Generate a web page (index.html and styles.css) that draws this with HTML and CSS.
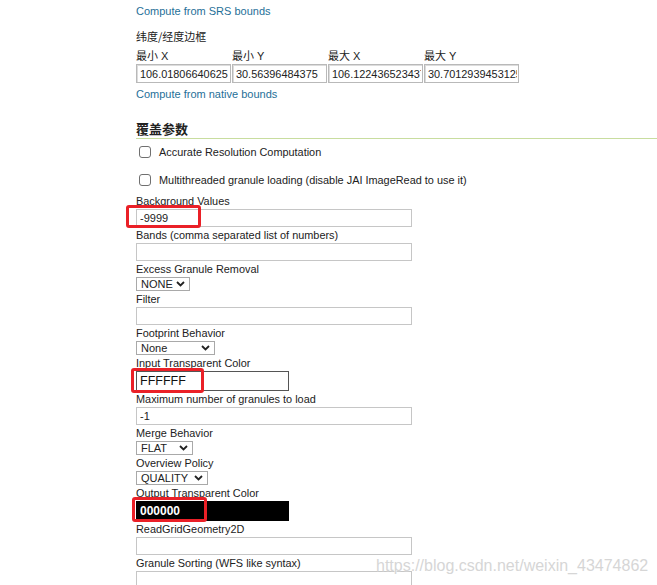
FILE: index.html
```html
<!DOCTYPE html>
<html lang="zh">
<head>
<meta charset="utf-8">
<title>覆盖参数</title>
<link rel="stylesheet" href="styles.css">
</head>
<body>
<div class="page">
  <a class="link first">Compute from SRS bounds</a>
  <div class="cjk-title">纬度/经度边框</div>
  <div class="bbox">
    <div class="bcol"><span class="blabel">最小 X</span><input class="binput" value="106.01806640625"></div>
    <div class="bcol"><span class="blabel">最小 Y</span><input class="binput" value="30.56396484375"></div>
    <div class="bcol"><span class="blabel">最大 X</span><input class="binput" value="106.122436523437"></div>
    <div class="bcol"><span class="blabel">最大 Y</span><input class="binput" value="30.7012939453125"></div>
  </div>
  <a class="link second">Compute from native bounds</a>

  <h3 class="section">覆盖参数</h3>

  <div class="check first-check"><span class="box"></span><span>Accurate Resolution Computation</span></div>
  <div class="check second-check"><span class="box"></span><span>Multithreaded granule loading (disable JAI ImageRead to use it)</span></div>

  <div class="fields">
    <div class="label">Background Values</div>
    <input class="text" value="-9999">
    <div class="label">Bands (comma separated list of numbers)</div>
    <input class="text" value="">
    <div class="label">Excess Granule Removal</div>
    <div class="select w-none-up"><span>NONE</span><svg width="9" height="6" viewBox="0 0 9 6"><path d="M1 1 L4.5 4.5 L8 1" fill="none" stroke="#222" stroke-width="1.8"/></svg></div>
    <div class="label">Filter</div>
    <input class="text" value="">
    <div class="label">Footprint Behavior</div>
    <div class="select w-none"><span>None</span><svg width="9" height="6" viewBox="0 0 9 6"><path d="M1 1 L4.5 4.5 L8 1" fill="none" stroke="#222" stroke-width="1.8"/></svg></div>
    <div class="label">Input Transparent Color</div>
    <input class="color light" value="FFFFFF">
    <div class="label">Maximum number of granules to load</div>
    <input class="text" value="-1">
    <div class="label">Merge Behavior</div>
    <div class="select w-flat"><span>FLAT</span><svg width="9" height="6" viewBox="0 0 9 6"><path d="M1 1 L4.5 4.5 L8 1" fill="none" stroke="#222" stroke-width="1.8"/></svg></div>
    <div class="label">Overview Policy</div>
    <div class="select w-quality"><span>QUALITY</span><svg width="9" height="6" viewBox="0 0 9 6"><path d="M1 1 L4.5 4.5 L8 1" fill="none" stroke="#222" stroke-width="1.8"/></svg></div>
    <div class="label">Output Transparent Color</div>
    <input class="color dark" value="000000">
    <div class="label">ReadGridGeometry2D</div>
    <input class="text" value="">
    <div class="label">Granule Sorting (WFS like syntax)</div>
    <input class="text" value="">
  </div>
</div>

<div class="mark mark1"></div>
<div class="mark mark2"></div>
<div class="mark mark3"></div>
<div class="watermark">https://blog.csdn.net/weixin_43474862</div>
</body>
</html>
```
FILE: styles.css
```css
html, body {
  margin: 0;
  padding: 0;
  background: #ffffff;
}
body {
  width: 657px;
  height: 585px;
  overflow: hidden;
  position: relative;
  font-family: "Liberation Sans", Arial, "Noto Sans CJK SC", sans-serif;
  font-size: 10.9px;
  color: #222222;
}
.page {
  padding: 3px 0 0 136px;
  display: flex;
  flex-direction: column;
  align-items: flex-start;
}
.link {
  color: #1f6f98;
  line-height: 16px;
  font-size: 11px;
  display: block;
}
.cjk-title {
  margin-top: 9px;
  line-height: 16px;
  font-family: "Noto Sans CJK SC", sans-serif;
  font-size: 11px;
}
.bbox {
  display: grid;
  grid-template-columns: repeat(4, 96px);
  margin-top: 5px;
}
.bcol {
  display: flex;
  flex-direction: column;
}
.blabel {
  line-height: 15px;
  font-family: "Liberation Sans", "Noto Sans CJK SC", sans-serif;
  font-size: 11px;
}
.binput {
  box-sizing: border-box;
  width: 95px;
  height: 19px;
  margin: 0;
  border: 1px solid #b9b9b9;
  box-shadow: inset 1px 1px 0 #dcdcdc;
  padding: 0 1px 0 3px;
  font-family: "Liberation Sans", Arial, sans-serif;
  font-size: 10.9px;
  color: #222;
  background: #fff;
}
.link.second {
  margin-top: 3px;
}
.section {
  align-self: stretch;
  margin: 19px 0 0 0;
  font-family: "Noto Sans CJK SC", sans-serif;
  font-weight: bold;
  font-size: 13px;
  line-height: 16px;
  padding-bottom: 1px;
  border-bottom: 1px solid #c8dd9f;
  color: #222;
}
.check {
  display: flex;
  align-items: center;
  gap: 8px;
  line-height: 16px;
}
.first-check { margin-top: 5px; }
.second-check { margin-top: 12px; }
.box {
  box-sizing: border-box;
  width: 12px;
  height: 12px;
  margin-left: 3px;
  border: 1px solid #707070;
  border-radius: 3px;
  background: #fff;
}
.fields {
  display: flex;
  flex-direction: column;
  align-items: flex-start;
  margin-top: 5px;
}
.label {
  line-height: 16px;
}
.text {
  box-sizing: border-box;
  width: 276px;
  height: 18px;
  margin: 0;
  border: 1px solid #c6c6c6;
  padding: 0 3px;
  font-family: "Liberation Sans", Arial, sans-serif;
  font-size: 11px;
  color: #222;
  background: #fff;
}
.select {
  box-sizing: border-box;
  height: 14px;
  border: 1px solid #a9a9a9;
  display: flex;
  align-items: center;
  justify-content: space-between;
  padding: 0 4px 0 4px;
  font-size: 11px;
  line-height: 12px;
  background: #fff;
}
.w-none-up { width: 54px; }
.w-none { width: 79px; }
.w-flat { width: 57px; }
.w-quality { width: 72px; }
.color {
  box-sizing: border-box;
  width: 153px;
  height: 20px;
  margin: 0;
  padding: 0 3px;
  font-family: "Liberation Sans", Arial, sans-serif;
  font-size: 12.5px;
}
.color.light {
  border: 1px solid #555;
  background: #fff;
  color: #111;
}
.color.dark {
  border: 1px solid #000;
  background: #000;
  color: #fff;
  font-weight: bold;
  font-size: 12px;
}
.mark {
  position: absolute;
  box-sizing: border-box;
  border: 3px solid #ea2027;
  border-radius: 3px;
}
.mark1 { left: 126px; top: 205px; width: 75px; height: 23px; }
.mark2 { left: 131px; top: 368px; width: 73px; height: 25px; }
.mark3 { left: 132px; top: 497px; width: 75px; height: 25px; }
.watermark {
  position: absolute;
  left: 376px;
  top: 556px;
  font-family: "Liberation Sans", Arial, sans-serif;
  font-size: 16px;
  line-height: 20px;
  color: #d6d6d6;
  text-shadow: 0 0 1px #fff, 0 0 1px #fff;
  white-space: nowrap;
}
```
